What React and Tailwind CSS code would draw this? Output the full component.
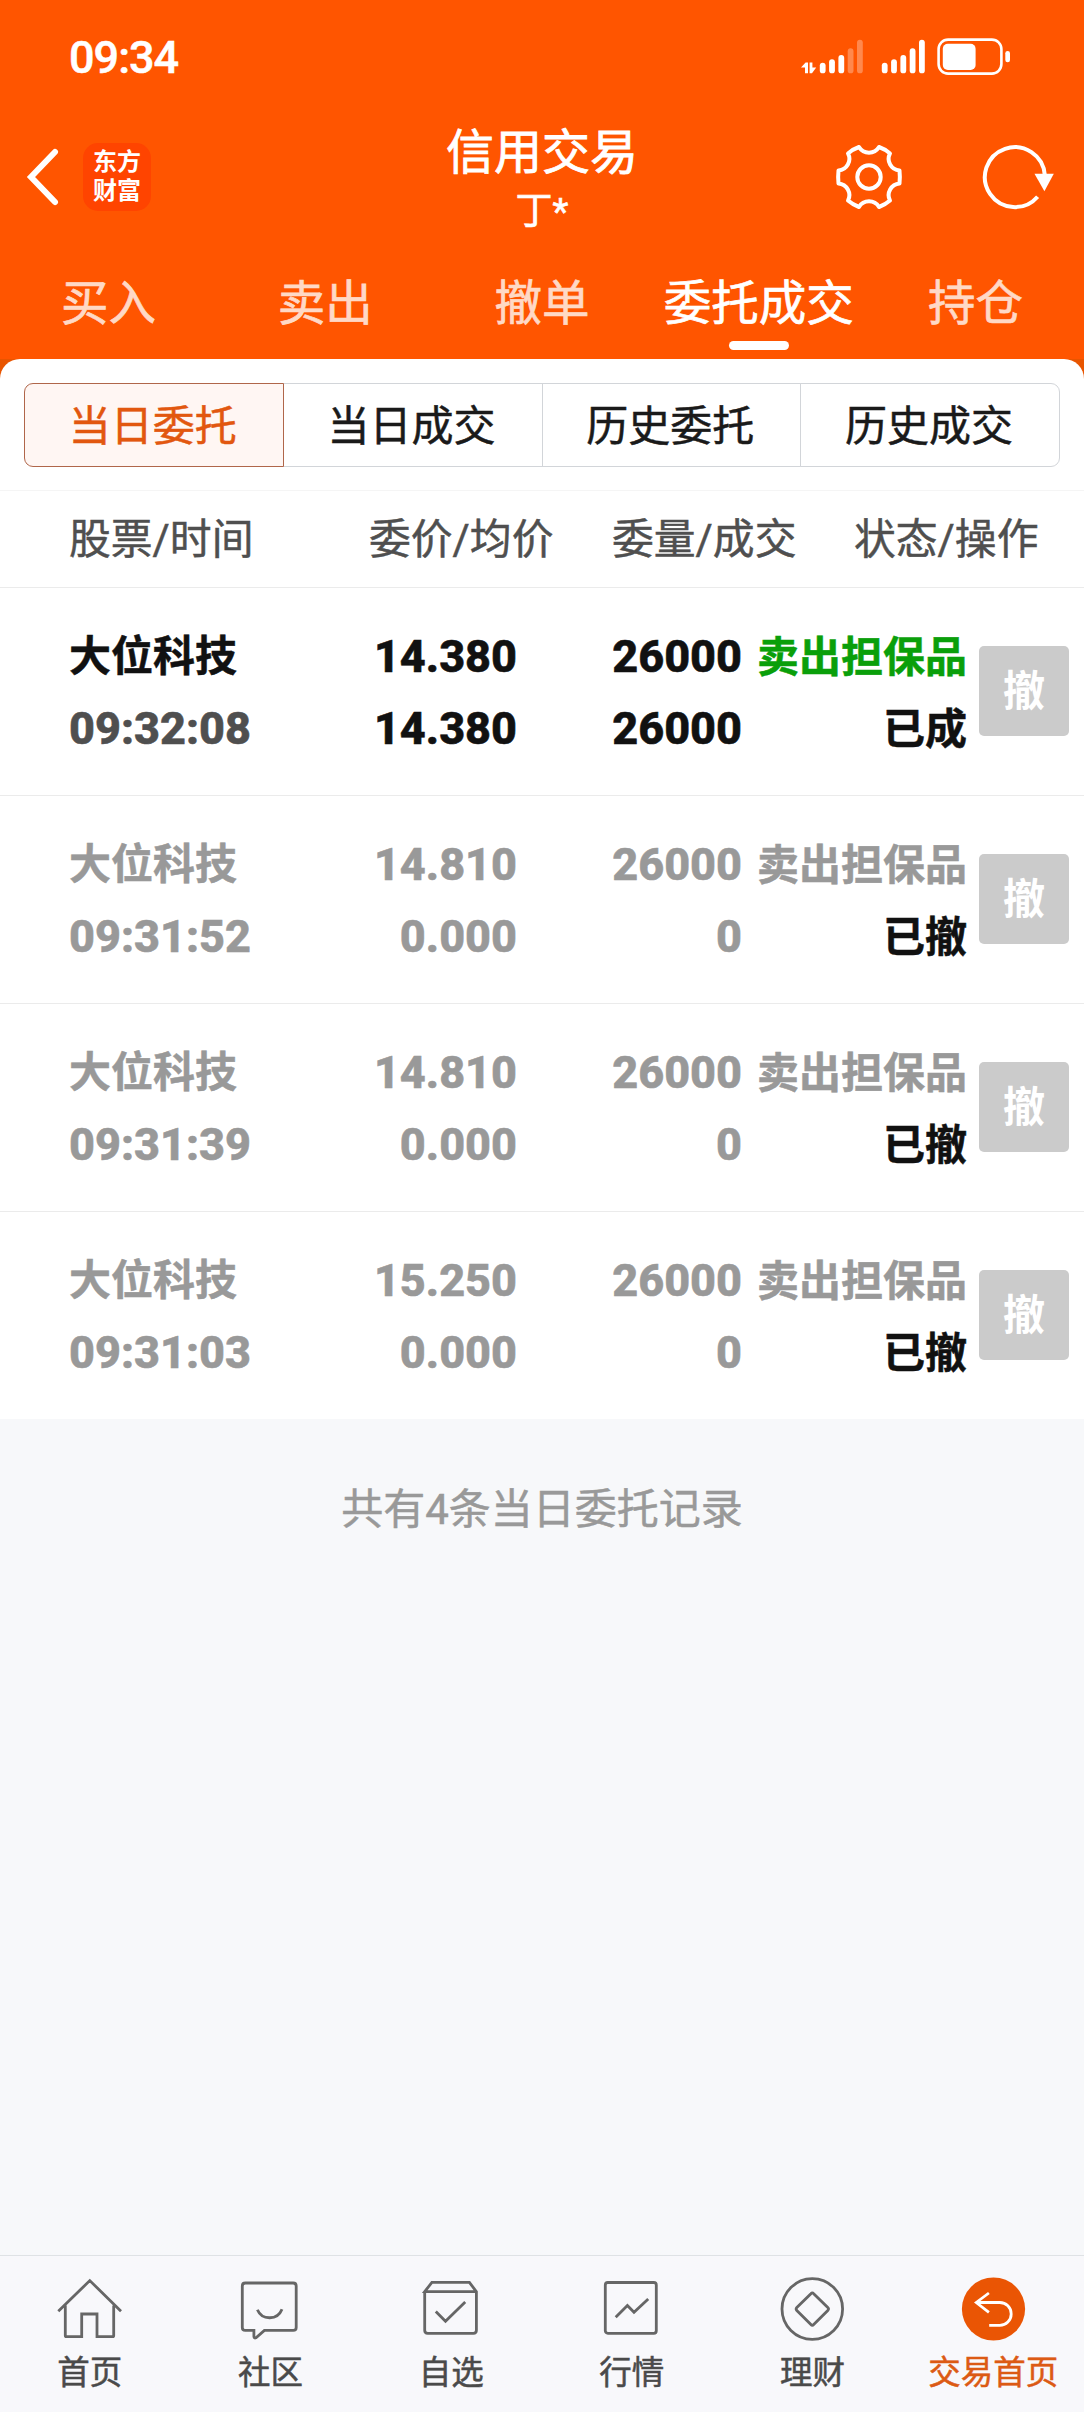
import React, { useState } from 'react';
import { cva } from 'class-variance-authority';
import clsx from 'clsx';

const mainTabs = ['买入', '卖出', '撤单', '委托成交', '持仓'];

const subTabs = ['当日委托', '当日成交', '历史委托', '历史成交'];

const orders = [
  { name: '大位科技', time: '09:32:08', price: '14.380', avg: '14.380', qty: '26000', filled: '26000', side: '卖出担保品', status: '已成', done: true },
  { name: '大位科技', time: '09:31:52', price: '14.810', avg: '0.000', qty: '26000', filled: '0', side: '卖出担保品', status: '已撤', done: false },
  { name: '大位科技', time: '09:31:39', price: '14.810', avg: '0.000', qty: '26000', filled: '0', side: '卖出担保品', status: '已撤', done: false },
  { name: '大位科技', time: '09:31:03', price: '15.250', avg: '0.000', qty: '26000', filled: '0', side: '卖出担保品', status: '已撤', done: false },
];

const signalTops = [25.7, 22.3, 18, 11.3, 2.7];

const SignalBars = ({ x, level }) =>
  signalTops.map((top, i) => (
    <rect key={top} x={x + i * 9.3} y={top} width="5.8" height={36.3 - top} rx="2.9" fill="#fff" opacity={i < level ? 1 : 0.3} />
  ));

const StatusIcons = () => (
  <svg width="212" height="40" viewBox="0 0 212 40" fill="none">
    <path d="M1 30.5 5.6 25.5H8V36.3H5V30.5ZM9.6 25.5H12.4V30.5H16.2L12 36.3H9.6Z" fill="#fff" />
    <SignalBars x={19.8} level={3} />
    <SignalBars x={81.8} level={5} />
    <rect x="138.6" y="2.6" width="62.8" height="34" rx="9.5" stroke="#fff" strokeWidth="2.6" />
    <rect x="142.8" y="6.7" width="32.8" height="26.3" rx="5" fill="#fff" />
    <rect x="205.3" y="14" width="4.7" height="11.3" rx="2.3" fill="#fff" />
  </svg>
);

const GearIcon = () => (
  <svg width="68" height="68" viewBox="-34 -34 68 68" fill="none" stroke="#fff" strokeWidth="4" strokeLinejoin="round">
    <path d="M30.5 -6.5Q31.2 0 30.5 6.5A11.7 11.7 0 0 0 21 23.6Q16.2 27.8 10 30A11.7 11.7 0 0 0 -10 30Q-16.2 27.8 -21 23.6A11.7 11.7 0 0 0 -30.5 6.5Q-31.2 0 -30.5 -6.5A11.7 11.7 0 0 0 -21 -23.6Q-16.2 -27.8 -10 -30A11.7 11.7 0 0 0 10 -30Q16.2 -27.8 21 -23.6A11.7 11.7 0 0 0 30.5 -6.5Z" />
    <circle r="11.7" />
  </svg>
);

const RefreshIcon = () => (
  <svg width="80" height="68" viewBox="-40 -34 80 68" fill="none">
    <path d="M22.6 19.7A30 30 0 1 1 29.8 -2" stroke="#fff" strokeWidth="4" />
    <path d="M19.5 -3.2H38.8L29.4 14.2Z" fill="#fff" />
  </svg>
);

const navItems = [
  {
    label: '首页',
    icon: <path d="M.3 34.2 31.8 3.6 63 34.2M7.3 28.5V58.5Q7.3 59.7 8.5 59.7H23.7V37H39V59.7H54.5Q55.7 59.7 55.7 58.5V28.5" />,
  },
  {
    label: '社区',
    icon: (
      <>
        <path d="M6.3 6H54.2Q57.2 6 57.2 9V50.4Q57.2 53.4 54.2 53.4H25.4L17 60.8Q15 61.6 14.9 59.5V53.4H6.3Q3.3 53.4 3.3 50.4V9Q3.3 6 6.3 6Z" />
        <path d="M18.4 32.7C23 43.5 38.5 43.5 43 32.2" />
      </>
    ),
  },
  {
    label: '自选',
    icon: (
      <>
        <path d="M4.7 14.7V53.3Q4.7 56.3 7.7 56.3H53.4Q56.4 56.3 56.4 53.3V14.7L49.4 5.3H11.9L4.7 14.7H56.4" />
        <path d="M15.8 34.4 25.5 44.2 45.2 25" />
      </>
    ),
  },
  {
    label: '行情',
    icon: (
      <>
        <rect x="5.3" y="5.5" width="51" height="50.8" rx="2.5" />
        <path d="M15.7 40.3 27.4 28.5 34 35.3 48.2 22" />
      </>
    ),
  },
  {
    label: '理财',
    icon: (
      <>
        <circle cx="31.3" cy="32" r="30.3" />
        <path d="M29.9 16.7Q31.3 15.2 32.7 16.7L46.8 30.6Q48.2 32 46.8 33.4L32.7 47.5Q31.3 49 29.9 47.5L15.8 33.4Q14.4 32 15.8 30.6Z" />
      </>
    ),
  },
  {
    label: '交易首页',
    active: true,
    icon: (
      <>
        <circle cx="31.5" cy="32" r="31.6" fill="#ea5504" stroke="none" />
        <path d="M26.9 16 14.3 25.5 26.9 35.3M14.3 25.5H37.8A11.4 11.4 0 0 1 37.8 48.3H27.2" stroke="#fff" />
      </>
    ),
  },
];

const subTab = cva('flex h-[84px] flex-1 items-center justify-center border pt-[2px] pr-[2px] text-[42px]', {
  variants: {
    active: {
      true: 'z-10 border-[#b0664a] bg-[#fff6f3] text-[#e2570f]',
      false: '-ml-px border-[#d2d5d9] bg-white text-[#1a1a1a]',
    },
  },
});

const Header = () => {
  const [tab, setTab] = useState('委托成交');

  return (
    <header className="h-[359px] bg-[#ff5500] text-white">
      {/* Status bar */}
      <div className="flex h-[114px] items-center justify-between pr-[72px] pl-[69px]">
        <span className="pt-[2px] font-[Roboto] text-[45px] font-medium tracking-[-1px] [-webkit-text-stroke:0.5px]">09:34</span>
        <StatusIcons />
      </div>

      {/* Title bar */}
      <div className="grid h-[126px] grid-cols-[1fr_auto_1fr] items-center">
        <div className="flex items-center pl-[26px]">
          <svg width="36" height="60" viewBox="0 0 36 60" fill="none">
            <path d="M29 5 5 30 29 55" stroke="#fff" strokeWidth="6" strokeLinecap="round" />
          </svg>
          <div className="ml-[21px] flex h-[68px] w-[68px] flex-col items-center justify-center rounded-[15px] bg-[#ff4400] text-[24px] leading-[29px] font-bold">
            <span>东方</span>
            <span>财富</span>
          </div>
        </div>
        <div className="flex flex-col items-center pt-[7px]">
          <h1 className="text-[48px] leading-[62px] [-webkit-text-stroke:0.8px]">信用交易</h1>
          <p className="text-[37px] leading-[56px] [-webkit-text-stroke:0.6px]">丁*</p>
        </div>
        <div className="flex items-center justify-end pr-[29px]">
          <GearIcon />
          <div className="ml-[72px]">
            <RefreshIcon />
          </div>
        </div>
      </div>

      {/* Main tabs */}
      <nav className="grid h-[119px] grid-cols-5">
        {mainTabs.map((item) => (
          <button
            key={item}
            onClick={() => setTab(item)}
            className={clsx(
              'flex flex-col items-center pt-[31px] text-[47.5px] leading-[66px] whitespace-nowrap [-webkit-text-stroke:0.7px]',
              item === tab ? 'text-white' : 'text-[#ffd9c6]'
            )}
          >
            {item}
            {item === tab && <span className="mt-[4px] h-[9px] w-[60px] rounded-full bg-white" />}
          </button>
        ))}
      </nav>
    </header>
  );
};

const digits = 'text-[45px] font-extrabold [-webkit-text-stroke:0.6px]';

const OrderRow = ({ order }) => {
  const tone = order.done ? 'text-[#111]' : 'text-[#999]';

  return (
    <div className="flex h-[208px] items-center border-b border-[#ebebeb] pl-[69px] text-[42px] leading-[72px] font-bold last:h-[207px] last:border-b-0">
      <div className={clsx('w-[210px] pt-[3px]', tone)}>
        <p className="[-webkit-text-stroke:0.5px]">{order.name}</p>
        <p className={clsx(digits, order.done && 'text-[#4f4f4f]')}>{order.time}</p>
      </div>
      <div className={clsx('w-[238px] pt-[3px] text-right', digits, tone)}>
        <p>{order.price}</p>
        <p>{order.avg}</p>
      </div>
      <div className={clsx('w-[225px] pt-[3px] text-right', digits, tone)}>
        <p>{order.qty}</p>
        <p>{order.filled}</p>
      </div>
      <div className="w-[225px] pt-[4px] text-right [-webkit-text-stroke:0.5px]">
        <p className={order.done ? 'text-[#0a9f0a]' : 'text-[#999]'}>{order.side}</p>
        <p className="text-[#111]">{order.status}</p>
      </div>
      <button className="mb-px ml-[12px] h-[90px] w-[90px] rounded-[5px] bg-[#cbcbcb] pt-[2px] text-white">撤</button>
    </div>
  );
};

const OrderList = () => {
  const [tab, setTab] = useState('当日委托');

  return (
    <section className="bg-[#e85500]">
      <div className="rounded-t-[20px] bg-white">
        <div className="flex h-[132px] border-b border-[#f5f5f5] px-6 pt-6 [-webkit-text-stroke:0.5px]">
          {subTabs.map((item) => (
            <button
              key={item}
              onClick={() => setTab(item)}
              className={clsx(subTab({ active: item === tab }), 'first:rounded-l-[9px] last:rounded-r-[9px]')}
            >
              {item}
            </button>
          ))}
        </div>
        <div className="flex h-[97px] items-center border-b border-[#ebebeb] pt-[2px] pl-[69px] text-[41.8px] text-[#4f4f4f] [-webkit-text-stroke:0.5px]">
          <span className="w-[300px]">股票/时间</span>
          <span className="w-[243px]">委价/均价</span>
          <span className="w-[242px]">委量/成交</span>
          <span>状态/操作</span>
        </div>
        <div>
          {orders.map((order) => (
            <OrderRow key={order.time} order={order} />
          ))}
        </div>
      </div>
    </section>
  );
};

const BottomNav = () => (
  <nav className="grid h-[157px] grid-cols-6 border-t border-[#dfe2e5] bg-[#f8f8fb]">
    {navItems.map((item) => (
      <div key={item.label} className="flex flex-col items-center pt-[21px]">
        <svg
          width="64"
          height="64"
          viewBox="0 0 64 64"
          fill="none"
          stroke="#666"
          strokeWidth="2.8"
          className="overflow-visible"
        >
          {item.icon}
        </svg>
        <span
          className={clsx(
            'mt-[8px] pr-px text-[32.5px] leading-[48px] [-webkit-text-stroke:0.5px]',
            item.active ? 'text-[#dc5a14]' : 'text-[#4a4a4a]'
          )}
        >
          {item.label}
        </span>
      </div>
    ))}
  </nav>
);

const App = () => (
  <div className="flex h-[2412px] w-[1084px] flex-col overflow-hidden bg-[#f7f8fa] font-[Roboto,'Noto_Sans_CJK_SC',sans-serif]">
    <Header />
    <OrderList />
    <p className="flex-1 pt-[59px] text-center text-[42px] leading-[64px] text-[#999] [-webkit-text-stroke:0.5px]">共有4条当日委托记录</p>
    <BottomNav />
  </div>
);

export default App;
